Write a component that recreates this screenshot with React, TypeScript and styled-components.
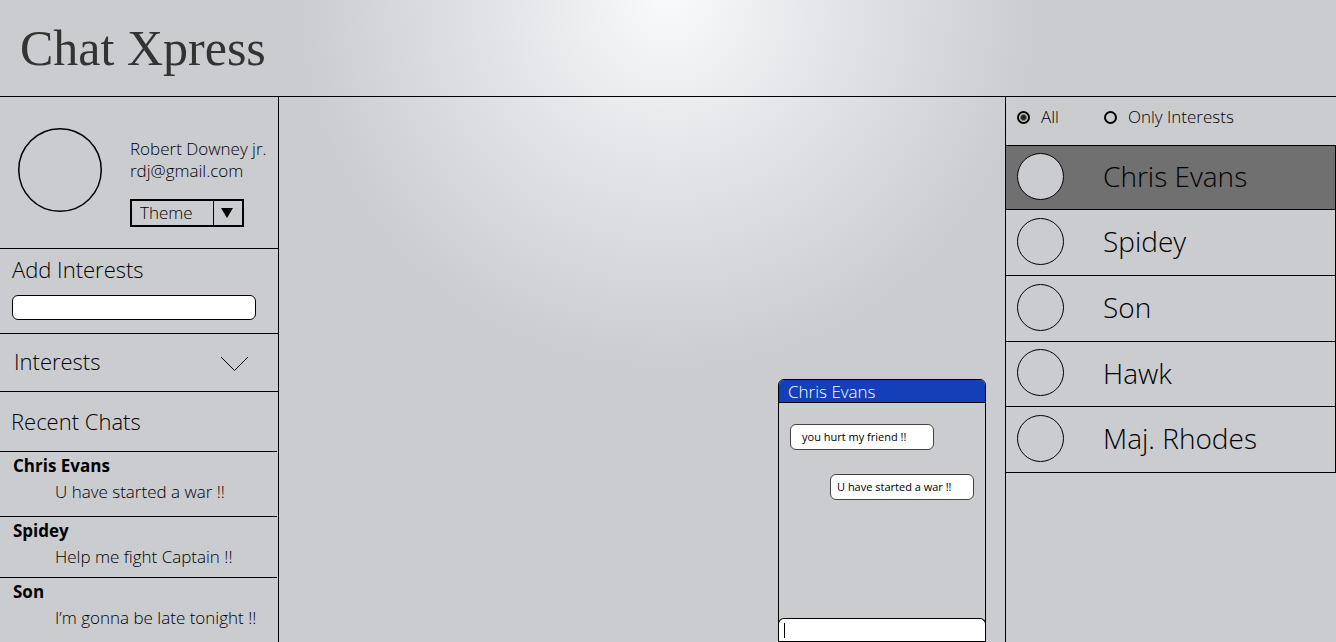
import React, { useState } from "react";
import styled, { createGlobalStyle } from "styled-components";

const INK = "#000";
const PANEL = "#cbccd0";

const GlobalStyle = createGlobalStyle`
  *, *::before, *::after { box-sizing: border-box; }
  body {
    margin: 0;
    background: ${PANEL};
    color: ${INK};
    font-family: "Open Sans", "Noto Sans", sans-serif;
    font-weight: 300;
  }
  button, input, select {
    font: inherit;
    color: inherit;
  }
  ul, h1, h2, p { margin: 0; padding: 0; font-weight: inherit; }
  ul { list-style: none; }
`;

const Page = styled.div`
  display: flex;
  flex-direction: column;
  min-height: 100vh;
  background: radial-gradient(circle at 50% 0, #f9fafb 0, #e4e5e8 160px, ${PANEL} 370px);
`;

const Header = styled.header`
  display: flex;
  align-items: center;
  height: 97px;
  padding: 0 20px;
  border-bottom: 1px solid ${INK};
`;

const Brand = styled.h1`
  font-family: "Liberation Serif", serif;
  font-size: 50px;
  line-height: 56px;
  font-weight: 400;
  color: #333;
`;

const Body = styled.div`
  display: grid;
  flex: 1;
  grid-template-columns: 279px 1fr 331px;
`;

const Sidebar = styled.aside`
  border-right: 1px solid ${INK};
`;

const Profile = styled.section`
  display: flex;
  gap: 28px;
  height: 152px;
  padding: 31px 0 0 18px;
  border-bottom: 1px solid ${INK};
`;

const ProfileText = styled.div`
  padding-top: 10px;
  font-size: 17px;
  line-height: 22px;
  white-space: nowrap;
`;

const ThemeField = styled.div`
  position: relative;
  width: 114px;
  margin-top: 17px;
`;

const ThemeSelect = styled.select`
  display: block;
  appearance: none;
  width: 100%;
  height: 28px;
  padding: 0 32px 0 8px;
  border: 2px solid ${INK};
  border-radius: 0;
  background: transparent;
  line-height: 24px;
`;

const ThemeArrow = styled.span`
  position: absolute;
  top: 2px;
  right: 2px;
  bottom: 2px;
  display: flex;
  align-items: center;
  justify-content: center;
  width: 29px;
  padding-right: 2px;
  border-left: 1px solid ${INK};
  pointer-events: none;
`;

const AddInterests = styled.section`
  height: 85px;
  padding: 5px 22px 0 12px;
  border-bottom: 1px solid ${INK};
`;

const SectionLabel = styled.label`
  display: block;
  font-size: 22px;
  line-height: 30px;
`;

const InterestInput = styled.input`
  display: block;
  width: 100%;
  height: 25px;
  margin-top: 11px;
  padding: 0 8px;
  border: 1px solid ${INK};
  border-radius: 6px;
  background: #fff;
  font-size: 14px;
`;

const InterestsToggle = styled.button`
  display: flex;
  align-items: flex-start;
  justify-content: space-between;
  width: 100%;
  height: 58px;
  padding: 12px 30px 0 14px;
  border: 0;
  border-bottom: 1px solid ${INK};
  background: transparent;
  font-size: 22px;
  line-height: 30px;
`;

const Chevron = styled.svg`
  margin-top: 10px;
`;

const RecentTitle = styled.h2`
  height: 60px;
  margin-right: 1px;
  padding: 14px 0 0 11px;
  border-bottom: 1px solid ${INK};
  font-size: 22px;
  line-height: 30px;
`;

const RecentList = styled.ul`
  display: grid;
  grid-template-rows: 65px 61px auto;
  margin-right: 1px;
`;

const RecentItem = styled.li`
  padding: 2px 0 0 13px;
  border-bottom: 1px solid ${INK};
  &:last-child { border-bottom: 0; }
`;

const RecentName = styled.p`
  font-size: 17px;
  line-height: 24px;
  font-weight: 700;
`;

const RecentText = styled.p`
  padding-left: 42px;
  font-size: 17px;
  line-height: 28px;
  white-space: nowrap;
`;

const Stage = styled.main`
  display: flex;
  align-items: flex-end;
  justify-content: flex-end;
  padding: 0 19px;
`;

const ChatWindow = styled.section`
  display: flex;
  flex-direction: column;
  width: 208px;
  height: 263px;
  border: 1px solid ${INK};
  border-radius: 6px 6px 0 0;
  overflow: hidden;
`;

const ChatTitle = styled.h2`
  height: 23px;
  padding-left: 9px;
  border-bottom: 1px solid ${INK};
  background: #133fb8;
  color: #fff;
  font-size: 17px;
  line-height: 24px;
`;

const Messages = styled.div`
  display: flex;
  flex: 1;
  flex-direction: column;
  gap: 24px;
  padding: 21px 11px;
`;

const Bubble = styled.p<{ $mine?: boolean }>`
  align-self: ${(p) => (p.$mine ? "flex-end" : "flex-start")};
  width: 144px;
  padding: 0 ${(p) => (p.$mine ? 6 : 11)}px;
  border: 1px solid #444;
  border-radius: 6px;
  background: #fff;
  font-size: 11px;
  line-height: 24px;
  font-weight: 400;
  white-space: nowrap;
`;

const Composer = styled.div`
  display: flex;
  align-items: center;
  height: 23px;
  margin: 0 -1px;
  padding-left: 5px;
  border: 1px solid ${INK};
  border-bottom: 0;
  border-radius: 6px 6px 0 0;
  background: #fff;
`;

const Caret = styled.span`
  width: 1px;
  height: 15px;
  background: ${INK};
`;

const ComposerInput = styled.input`
  flex: 1;
  min-width: 0;
  border: 0;
  padding: 0 4px;
  outline: 0;
  background: transparent;
  font-size: 12px;
  line-height: 20px;
`;

const People = styled.aside`
  border-left: 1px solid ${INK};
`;

const Filters = styled.div`
  display: flex;
  align-items: center;
  gap: 45px;
  height: 48px;
  padding: 0 0 8px 11px;
`;

const FilterLabel = styled.label`
  display: flex;
  align-items: center;
  gap: 11px;
  font-size: 17px;
  line-height: 24px;
`;

const Radio = styled.input`
  appearance: none;
  width: 13px;
  height: 13px;
  margin: 0;
  border: 2px solid ${INK};
  border-radius: 50%;
  &:checked { background: radial-gradient(circle, #222 2px, transparent 4px); }
`;

const ContactList = styled.ul`
  display: grid;
  grid-template-rows: 64px 66px 66px 65px 66px;
  border-top: 1px solid ${INK};
  border-right: 1px solid ${INK};
`;

const Contact = styled.button<{ $active: boolean }>`
  display: flex;
  align-items: center;
  gap: 39px;
  width: 100%;
  height: 100%;
  padding: 0 0 3px 11px;
  border: 0;
  border-bottom: 1px solid ${INK};
  background: ${(p) => (p.$active ? "#707070" : "transparent")};
  font-size: 28px;
  line-height: 40px;
  text-align: left;
`;

const AvatarDrawing = styled.svg`
  flex: none;
`;

function Avatar({ size, stroke }: { size: number; stroke: number }) {
  return (
    <AvatarDrawing width={size} height={size} aria-hidden="true">
      <circle cx={size / 2} cy={size / 2} r={(size - stroke) / 2} fill={PANEL} stroke={INK} strokeWidth={stroke} />
    </AvatarDrawing>
  );
}

const recentChats = [
  { name: "Chris Evans", text: "U have started a war !!" },
  { name: "Spidey", text: "Help me fight Captain !!" },
  { name: "Son", text: "I’m gonna be late tonight !!" },
];

const contacts = ["Chris Evans", "Spidey", "Son", "Hawk", "Maj. Rhodes"];

export default function App() {
  const [filter, setFilter] = useState("all");
  const [selected, setSelected] = useState("Chris Evans");
  const [open, setOpen] = useState(false);

  return (
    <>
      <GlobalStyle />
      <Page>
        <Header>
          <Brand>Chat Xpress</Brand>
        </Header>
        <Body>
          <Sidebar>
            <Profile>
              <Avatar size={84} stroke={1.5} />
              <ProfileText>
                <p>Robert Downey jr.</p>
                <p>rdj@gmail.com</p>
                <ThemeField>
                  <ThemeSelect aria-label="Theme" defaultValue="theme">
                    <option value="theme">Theme</option>
                  </ThemeSelect>
                  <ThemeArrow>
                    <svg width="12" height="10" viewBox="0 0 12 10" aria-hidden="true">
                      <path d="M0 0H12L6 10Z" fill={INK} />
                    </svg>
                  </ThemeArrow>
                </ThemeField>
              </ProfileText>
            </Profile>
            <AddInterests>
              <SectionLabel htmlFor="interest">Add Interests</SectionLabel>
              <InterestInput id="interest" type="text" />
            </AddInterests>
            <InterestsToggle type="button" aria-expanded={open} onClick={() => setOpen(!open)}>
              Interests
              <Chevron width="28" height="15" viewBox="0 0 28 15" fill="none" stroke={INK} aria-hidden="true">
                <path d="M1 1L14.5 14.5L28 1" />
              </Chevron>
            </InterestsToggle>
            <RecentTitle>Recent Chats</RecentTitle>
            <RecentList>
              {recentChats.map((chat) => (
                <RecentItem key={chat.name}>
                  <RecentName>{chat.name}</RecentName>
                  <RecentText>{chat.text}</RecentText>
                </RecentItem>
              ))}
            </RecentList>
          </Sidebar>
          <Stage>
            <ChatWindow>
              <ChatTitle>Chris Evans</ChatTitle>
              <Messages>
                <Bubble>you hurt my friend !!</Bubble>
                <Bubble $mine>U have started a war !!</Bubble>
              </Messages>
              <Composer>
                <Caret />
                <ComposerInput type="text" aria-label="Message" />
              </Composer>
            </ChatWindow>
          </Stage>
          <People>
            <Filters>
              <FilterLabel>
                <Radio type="radio" name="filter" checked={filter === "all"} onChange={() => setFilter("all")} />
                All
              </FilterLabel>
              <FilterLabel>
                <Radio
                  type="radio"
                  name="filter"
                  checked={filter === "interests"}
                  onChange={() => setFilter("interests")}
                />
                Only Interests
              </FilterLabel>
            </Filters>
            <ContactList>
              {contacts.map((name) => (
                <li key={name}>
                  <Contact type="button" $active={name === selected} onClick={() => setSelected(name)}>
                    <Avatar size={47} stroke={1} />
                    {name}
                  </Contact>
                </li>
              ))}
            </ContactList>
          </People>
        </Body>
      </Page>
    </>
  );
}
